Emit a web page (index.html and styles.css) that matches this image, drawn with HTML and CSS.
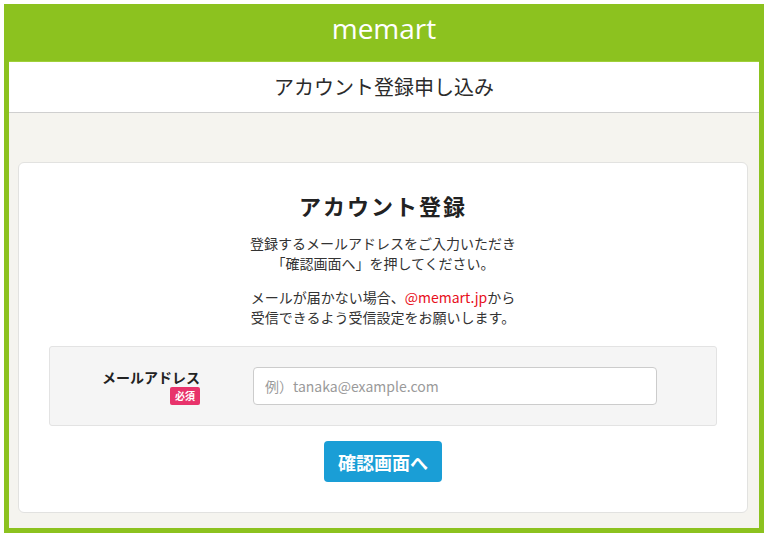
FILE: index.html
```html
<!DOCTYPE html>
<html lang="ja">
<head>
<meta charset="utf-8">
<title>アカウント登録申し込み</title>
<link rel="stylesheet" href="styles.css">
</head>
<body>
<div class="frame">
  <header class="brand">memart</header>
  <div class="titlebar">アカウント登録申し込み</div>
  <main class="stage">
    <section class="card">
      <h1 class="card-title">アカウント登録</h1>
      <p class="lead">登録するメールアドレスをご入力いただき<br>「確認画面へ」を押してください。</p>
      <p class="lead">メールが届かない場合、<span class="domain">@memart.jp</span>から<br>受信できるよう受信設定をお願いします。</p>
      <div class="field">
        <div class="field-label">
          <span class="label-text">メールアドレス</span>
          <span class="badge">必須</span>
        </div>
        <input class="field-input" type="email" placeholder="例）tanaka@example.com">
      </div>
      <div class="actions">
        <button class="submit" type="button">確認画面へ</button>
      </div>
    </section>
  </main>
</div>
</body>
</html>
```
FILE: styles.css
```css
* { box-sizing: border-box; }
html, body { margin: 0; background: #fff; }
body {
  padding: 4px;
  font-family: "Noto Sans CJK JP", "Noto Sans", sans-serif;
  color: #333;
}
.frame {
  width: 760px;
  border: 5px solid #8cc21f;
  background: #f5f4ef;
}
.brand {
  height: 53px;
  background: #8cc21f;
  color: #fff;
  font-family: "Open Sans", "Noto Sans", sans-serif;
  font-size: 28px;
  line-height: 38px;
  text-align: center;
  border-bottom: 1px solid #9fd03a;
}
.titlebar {
  height: 51px;
  background: #fff;
  border-bottom: 1px solid #cfcfcf;
  display: flex;
  align-items: center;
  justify-content: center;
  font-size: 20px;
  color: #2b2b2b;
  padding-bottom: 1px;
}
.stage {
  padding: 49px 11px 15px 9px;
}
.card {
  background: #fff;
  border: 1px solid #e2e2e0;
  border-radius: 6px;
  padding: 27px 30px 30px;
  display: flex;
  flex-direction: column;
}
.card-title {
  margin: 0;
  font-size: 22px;
  line-height: 30px;
  font-weight: 700;
  letter-spacing: 2px;
  text-align: center;
  color: #222;
}
.lead {
  margin: 13px 0 0;
  font-size: 14px;
  line-height: 20px;
  text-align: center;
  color: #333;
}
.lead + .lead { margin-top: 14px; }
.domain { color: #e8101c; }
.field {
  margin-top: 19px;
  background: #f5f5f5;
  border: 1px solid #e3e3e3;
  border-radius: 3px;
  padding: 19px 59px 20px 0;
  display: grid;
  grid-template-columns: 150px 1fr;
  column-gap: 53px;
  align-items: start;
}
.field-label {
  display: flex;
  flex-direction: column;
  align-items: flex-end;
  padding-top: 1px;
}
.label-text {
  font-size: 14px;
  line-height: 20px;
  font-weight: 700;
  color: #222;
}
.badge {
  width: 30px;
  height: 18px;
  border-radius: 2px;
  background: #e8336b;
  color: #fff;
  font-size: 10px;
  font-weight: 700;
  line-height: 18px;
  text-align: center;
}
.field-input {
  display: block;
  width: 100%;
  height: 38px;
  margin-top: 1px;
  border: 1px solid #cccccc;
  border-radius: 4px;
  background: #fff;
  padding: 0 11px;
  font-family: "Noto Sans CJK JP", "Noto Sans", sans-serif;
  font-size: 14px;
  color: #333;
}
.field-input::placeholder { color: #9a9a9a; }
.actions {
  margin-top: 15px;
  display: flex;
  justify-content: center;
}
.submit {
  width: 118px;
  height: 41px;
  border: none;
  border-radius: 4px;
  background: #1a9ed6;
  color: #fff;
  font-family: "Noto Sans CJK JP", "Noto Sans", sans-serif;
  font-size: 18px;
  font-weight: 700;
  padding: 0;
}
```
